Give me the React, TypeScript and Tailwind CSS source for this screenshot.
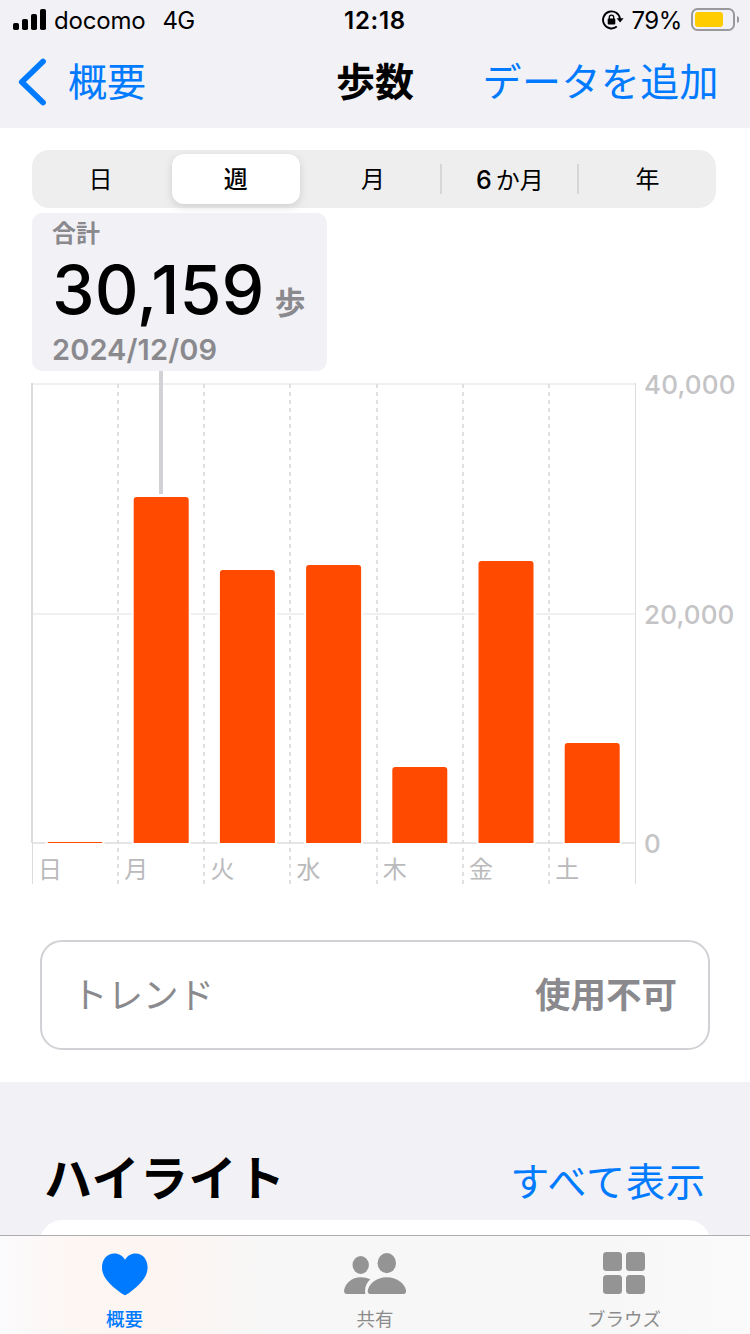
import React, { useState } from 'react';

const days = [
    { label: '日', top: 842 },
    { label: '月', top: 497 },
    { label: '火', top: 570 },
    { label: '水', top: 565 },
    { label: '木', top: 767 },
    { label: '金', top: 561 },
    { label: '土', top: 743 },
];

const ranges = ['日', '週', '月', '6か月', '年'];

const StatusBar = () => (
    <div className="grid h-10 shrink-0 grid-cols-[1fr_auto_1fr] items-center text-[24px] leading-none text-black">
        <div className="flex items-center pl-[13px]">
            <svg width="34" height="22" viewBox="0 0 34 22">
                <rect x="0" y="14" width="6" height="7" rx="1.8" />
                <rect x="9" y="10" width="6" height="11" rx="1.8" />
                <rect x="18" y="5" width="6" height="16" rx="1.8" />
                <rect x="27" y="0" width="6" height="21" rx="1.8" />
            </svg>
            <span className="ml-[7px] pt-[2px] tracking-[-0.2px]">docomo</span>
            <span className="ml-[17px] pt-[2px] tracking-[-0.6px]">4G</span>
        </div>
        <span className="pt-[2px] font-semibold tracking-[0.7px]">12:18</span>
        <div className="flex items-center justify-end pr-[11px]">
            <svg width="22" height="20" viewBox="0 0 22 20" className="mr-[7px]">
                <path d="M14.8 16.6A8.5 8.5 0 1 1 18 9" fill="none" stroke="#000" strokeWidth="1.9" />
                <path d="M14.6 8.2H21.6L18.1 12.6Z" />
                <rect x="5.7" y="8.6" width="7.6" height="6" rx="1" />
                <path d="M7.3 9V7.3a2.2 2.2 0 0 1 4.4 0V9" fill="none" stroke="#000" strokeWidth="1.3" />
            </svg>
            <span className="pt-[2px] tracking-[-0.4px]">79%</span>
            <svg width="48" height="24" viewBox="0 0 48 24" className="ml-[9px]">
                <rect x="1" y="1" width="42" height="21" rx="5.5" fill="none" stroke="#98989d" strokeWidth="2" />
                <rect x="4" y="4" width="28" height="15" rx="3" fill="#ffcc00" />
                <path d="M46 8c2 1 2.4 2.4 2.4 3.5S48 14 46 15Z" fill="#98989d" />
            </svg>
        </div>
    </div>
);

const NavBar = () => (
    <div className="grid h-[88px] shrink-0 grid-cols-[1fr_auto_1fr] items-center pb-[5px] text-[39px] leading-none">
        <button className="flex items-center pl-[18px] text-[#007aff]">
            <svg width="28" height="48" viewBox="0 0 28 48" className="mr-[22px]">
                <path d="M25 3.5 3.8 24 25 44.5" fill="none" stroke="#007aff" strokeWidth="5.8" strokeLinecap="round" strokeLinejoin="round" />
            </svg>
            概要
        </button>
        <h1 className="font-bold">歩数</h1>
        <button className="flex justify-end whitespace-nowrap pr-[31px] tracking-[0.4px] text-[#007aff]">データを追加</button>
    </div>
);

const Chart = () => (
    <svg width="750" height="519" viewBox="0 371 750 519" className="block shrink-0 overflow-visible">
        <path d="M32 384H636M32 614H636" stroke="#ebebed" strokeWidth="1.5" />
        <path d="M32 843H636" stroke="#dcdcdf" strokeWidth="1.5" />
        <path d="M32 383V843" stroke="#dcdcdf" strokeWidth="2" />
        <path d="M32.5 843V884M635.5 383V884" stroke="#dcdcdf" strokeWidth="1" />
        {days.slice(1).map((day, i) => (
            <path key={day.label} d={`M${Math.round(118 + i * 86.2)} 384V884`} stroke="#e0e0e3" strokeWidth="2" strokeDasharray="4 4" />
        ))}
        <path d="M161 371V494" stroke="#d1d1d6" strokeWidth="4" />
        {days.map((day, i) => {
            const x = 47.5 + i * 86.2;
            const r = Math.min(3, 843 - day.top);
            return (
                <path
                    key={day.label}
                    d={`M${x} 843V${day.top + r}q0 ${-r} ${r} ${-r}H${x + 55 - r}q${r} 0 ${r} ${r}V843Z`}
                    fill="#ff4a00"
                    stroke="#fff"
                    strokeWidth="4"
                    paintOrder="stroke"
                />
            );
        })}
        {days.map((day, i) => (
            <text key={day.label} x={38 + i * 86.2} y="878" fontSize="24" fill="#bababd">{day.label}</text>
        ))}
        <g fontSize="26" fontWeight="500" fill="#c4c4c6" letterSpacing="0.15">
            <text x="644" y="394">40,000</text>
            <text x="644" y="624">20,000</text>
            <text x="644" y="853">0</text>
        </g>
    </svg>
);

const TabBar = () => (
    <div className="grid h-[99px] shrink-0 grid-cols-3 border-t border-[#aeaeb0] bg-[linear-gradient(90deg,#fbfafc_0%,#fdf6f3_10%,#fdf5f2_20%,#f7f7f7_36%,#f7f7f7_80%,#fafafa_100%)] text-[18.5px] leading-none text-[#8c8c8c]">
        <div className="flex flex-col items-center pr-px pt-[17px] font-medium text-[#007aff]">
            <svg width="46" height="43" viewBox="0 0 46 43">
                <path fill="#007aff" d="M23 42.2C21.7 41.8 19.6 40.4 18 39.2 7.5 31.4 0 23.8 0 14.5 0 6 5.3 0.4 12.4 0.4 17.1 0.4 20.9 2.7 23 6.7 25.2 2.7 28.9 0.4 33.5 0.4 40.6 0.4 45.6 6 45.6 14.5 45.6 23.8 38.3 31.4 28 39.2 26.3 40.5 24.2 41.8 23 42.2Z" />
            </svg>
            <span className="mt-[14px]">概要</span>
        </div>
        <div className="flex flex-col items-center pt-[17px]">
            <svg width="62" height="42" viewBox="0 0 62 42" fill="#949494">
                <ellipse cx="16.7" cy="12" rx="8.2" ry="8.9" />
                <ellipse cx="42.8" cy="10.2" rx="9.2" ry="10.1" />
                <path d="M26.3 26.3C22.3 30 20.3 35 21.3 41H3C.8 41-.1 39.6.1 37.5.9 30.5 8 24.2 16.7 24.2c3.5 0 6.8.8 9.6 2.1Z" />
                <path d="M42.8 24.2C53.5 24.2 61 31 62 37.4c.3 2.2-.9 3.6-2.9 3.6H26.7c-2.2 0-3.2-1.4-2.9-3.6C24.7 31 32.2 24.2 42.8 24.2Z" />
            </svg>
            <span className="mt-[15px]">共有</span>
        </div>
        <div className="flex flex-col items-center pr-[2px] pt-4">
            <svg width="42" height="42" viewBox="0 0 42 42" fill="#949494">
                <rect width="19" height="19" rx="3.5" />
                <rect x="23" width="19" height="19" rx="3.5" />
                <rect y="23" width="19" height="19" rx="3.5" />
                <rect x="23" y="23" width="19" height="19" rx="3.5" />
            </svg>
            <span className="mt-4">ブラウズ</span>
        </div>
    </div>
);

const App = () => {
    const [range, setRange] = useState('週');
    return (
        <div className="flex h-[1334px] w-[750px] flex-col overflow-hidden bg-[#f2f1f6] font-[Inter,'Noto_Sans_CJK_JP',sans-serif]">
            <StatusBar />
            <NavBar />
            <main className="flex h-[954px] shrink-0 flex-col bg-white pt-[22px]">
                <div className="ml-8 grid h-[58px] w-[684px] shrink-0 grid-cols-5 rounded-[17px] bg-[#eeeeee] text-[24px] leading-none">
                    {ranges.map((item, i) => (
                        <div key={item} className="flex items-center">
                            <button
                                onClick={() => setRange(item)}
                                className={
                                    range === item
                                        ? 'ml-[3px] mr-[6px] h-[50px] flex-1 rounded-xl bg-white pt-[2px] font-medium shadow-[0_3px_10px_rgba(0,0,0,0.13)]'
                                        : 'h-[50px] flex-1 pt-[2px]'
                                }
                            >
                                {item === '6か月' ? <span><span className="mr-1 text-[25px] font-medium">6</span>か月</span> : item}
                            </button>
                            {(i === 2 || i === 3) && <div className="h-[30px] w-[2px] bg-[#d6d6d8]" />}
                        </div>
                    ))}
                </div>
                <div className="ml-8 mt-[5px] flex h-[158px] w-[295px] shrink-0 flex-col rounded-[10px] bg-[#f2f1f6] pl-5 font-semibold leading-none text-[#8a8a8e]">
                    <div className="mt-[9px] text-[24px]">合計</div>
                    <div className="mt-[9px] flex items-baseline">
                        <span className="text-[68px] font-medium tracking-[0px] text-black">30,159</span>
                        <span className="ml-[10px] text-[31px]">歩</span>
                    </div>
                    <div className="mt-[12px] text-[29px] tracking-[0.1px]">2024/12/09</div>
                </div>
                <Chart />
                <div className="mx-10 mt-[50px] flex h-[110px] shrink-0 items-center justify-between rounded-[22px] border-2 border-[#d1d1d6] pl-[30px] pr-[31px] pt-[2px] text-[35.5px] leading-none text-[#8a8a8e]">
                    <span>トレンド</span>
                    <span className="font-bold">使用不可</span>
                </div>
            </main>
            <section className="flex min-h-0 flex-1 flex-col overflow-hidden">
                <div className="flex h-[138px] shrink-0 items-baseline justify-between pl-[44px] pr-[44px] pt-[73px] leading-none">
                    <h2 className="text-[48px] font-bold tracking-[0.5px]">ハイライト</h2>
                    <button className="text-[39px] tracking-[1px] text-[#007aff]">すべて表示</button>
                </div>
                <div className="mx-10 h-20 shrink-0 rounded-[22px] bg-white" />
            </section>
            <TabBar />
        </div>
    );
};
export default App;
